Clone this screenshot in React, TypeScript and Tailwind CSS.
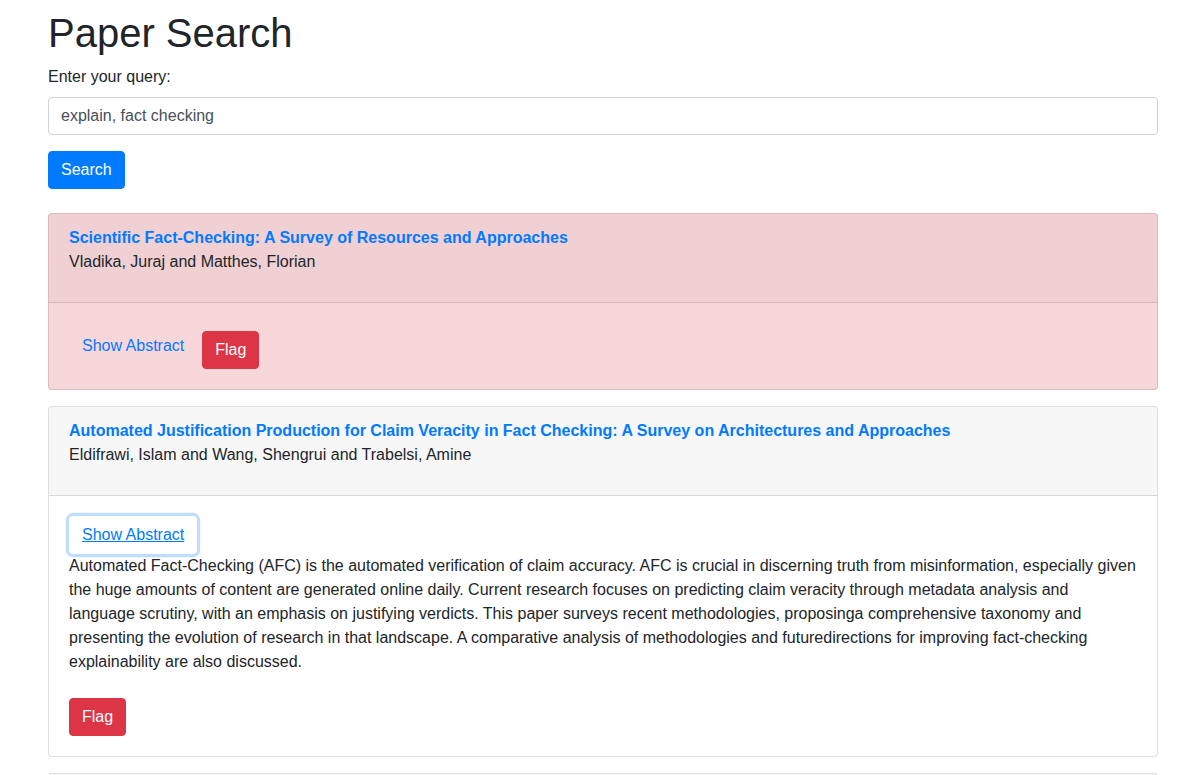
import React from "react";

const font = { fontFamily: '"Liberation Sans", Arial, sans-serif' };

function ShowAbstract({ focused }: { focused?: boolean }) {
  return (
    <button
      type="button"
      className={
        "h-[38px] px-3 rounded border border-transparent text-base leading-6 text-[#007bff] bg-transparent " +
        (focused ? "underline shadow-[0_0_0_3.2px_rgba(0,123,255,0.25)]" : "")
      }
    >
      Show Abstract
    </button>
  );
}

function Flag({ className = "" }: { className?: string }) {
  return (
    <button
      type="button"
      className={
        "h-[38px] px-3 rounded border border-[#dc3545] bg-[#dc3545] text-white text-base leading-6 " +
        className
      }
    >
      Flag
    </button>
  );
}

function CardHeader({ title, authors }: { title: string; authors: string }) {
  return (
    <div className="px-5 pt-3 pb-3 bg-black/[0.03] border-b border-black/[0.125]">
      <div className="font-bold text-[#007bff] leading-6">{title}</div>
      <p className="mb-4 leading-6">{authors}</p>
    </div>
  );
}

export default function App() {
  return (
    <div className="min-h-screen bg-white text-[#212529] text-base" style={font}>
      <div className="ml-[48px] w-[1110px] pt-[9px]">
        <h1 className="text-[40px] leading-[1.2] font-medium mb-2">Paper Search</h1>
        <label className="block leading-6 mb-2">Enter your query:</label>
        <input
          readOnly
          value="explain, fact checking"
          className="block w-full h-[38px] px-3 border border-[#ced4da] rounded text-[#495057] leading-6 outline-none mb-4"
          style={font}
        />
        <button
          type="button"
          className="h-[38px] px-3 rounded border border-[#007bff] bg-[#007bff] text-white leading-6 mb-6"
        >
          Search
        </button>

        <div className="rounded border border-black/[0.125] bg-[#f8d7da] overflow-hidden mb-4">
          <CardHeader
            title="Scientific Fact-Checking: A Survey of Resources and Approaches"
            authors="Vladika, Juraj and Matthes, Florian"
          />
          <div className="p-5 flex items-start">
            <div className="mt-[4px]">
              <ShowAbstract />
            </div>
            <Flag className="mt-2 ml-[5px]" />
          </div>
        </div>

        <div className="rounded border border-black/[0.125] bg-white overflow-hidden mb-4">
          <CardHeader
            title="Automated Justification Production for Claim Veracity in Fact Checking: A Survey on Architectures and Approaches"
            authors="Eldifrawi, Islam and Wang, Shengrui and Trabelsi, Amine"
          />
          <div className="p-5">
            <ShowAbstract focused />
            <p className="leading-6 mb-4">
              Automated Fact-Checking (AFC) is the automated verification of claim accuracy. AFC is crucial in
              discerning truth from misinformation, especially given the huge amounts of content are generated
              online daily. Current research focuses on predicting claim veracity through metadata analysis and
              language scrutiny, with an emphasis on justifying verdicts. This paper surveys recent methodologies,
              proposinga comprehensive taxonomy and presenting the evolution of research in that landscape. A
              comparative analysis of methodologies and futuredirections for improving fact-checking explainability
              are also discussed.
            </p>
            <Flag className="mt-2" />
          </div>
        </div>

        <div className="rounded border border-black/[0.125] bg-white overflow-hidden mb-4">
          <CardHeader
            title="Explainable Automated Fact-Checking: A Survey"
            authors="Kotonya, Neema and Toni, Francesca"
          />
          <div className="p-5">
            <ShowAbstract />
            <div>
              <Flag className="mt-2" />
            </div>
          </div>
        </div>
      </div>
    </div>
  );
}
